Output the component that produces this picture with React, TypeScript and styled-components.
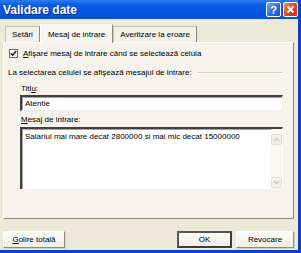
import * as React from 'react'
import styled, { createGlobalStyle, css } from 'styled-components'

const GlobalStyle = createGlobalStyle`
    html, body {
        margin: 0;
        padding: 0;
        background: #ece9d8;
    }
    body {
        font-family: "Liberation Sans", Arial, sans-serif;
        font-size: 8px;
        color: #000;
    }
`

const Window = styled.div`
    width: 301px;
    height: 253px;
    box-sizing: border-box;
    display: flex;
    flex-direction: column;
    background: #ece9d8;
    border-right: 3px solid #0842c8;
    border-bottom: 3px solid #0842c8;
    overflow: hidden;
`

const TitleBar = styled.div`
    height: 19px;
    flex: none;
    margin-right: -3px;
    display: flex;
    align-items: center;
    justify-content: space-between;
    padding: 0 3px 0 3px;
    background: linear-gradient(#2f7df2 0%, #0a5ce4 25%, #0654e0 60%, #0650d6 100%);
`

const Title = styled.span`
    color: #fff;
    font-weight: bold;
    font-size: 12px;
    text-shadow: 1px 1px 0 #0a2f8a;
`

const TitleButtons = styled.div`
    display: flex;
    gap: 2px;
`

const TitleButton = styled.div<{ $close?: boolean }>`
    width: 15px;
    height: 15px;
    box-sizing: border-box;
    border: 1px solid #fff;
    border-radius: 2px;
    display: flex;
    align-items: center;
    justify-content: center;
    color: #fff;
    font-weight: bold;
    font-size: 11px;
    background: ${p => p.$close
        ? 'linear-gradient(135deg, #f08a6c, #e0431e 55%, #c53512)'
        : 'linear-gradient(135deg, #7fa8f7, #2e68e8 55%, #1c4fd0)'};
`

const Body = styled.div`
    flex: 1;
    display: flex;
    flex-direction: column;
    padding: 4px 4px 0 3px;
`

const TabStrip = styled.div`
    display: flex;
    align-items: flex-end;
    height: 19px;
    padding-left: 2px;
`

const Tab = styled.div<{ $active?: boolean }>`
    height: 16px;
    box-sizing: border-box;
    padding: 0 6px;
    display: flex;
    align-items: center;
    background: #f4f2e8;
    border: 1px solid #c9c5b4;
    border-bottom: none;
    border-right-color: #8c8a80;
    ${p => p.$active && css`
        height: 19px;
        margin-bottom: -1px;
        background: #f7f6ef;
        border-color: #fff;
        border-right-color: #8c8a80;
        padding: 0 7px;
        position: relative;
        z-index: 1;
    `}
`

const Panel = styled.div`
    height: 177px;
    flex: none;
    box-sizing: border-box;
    background: #f5f3eb;
    border: 1px solid #fff;
    border-right-color: #8c8a80;
    border-bottom-color: #8c8a80;
    padding: 5px 11px 0 4px;
    display: flex;
    flex-direction: column;
`

const CheckRow = styled.label`
    display: flex;
    align-items: center;
    gap: 5px;
    height: 11px;
    padding-left: 1px;
`

const CheckBox = styled.span`
    width: 9px;
    height: 9px;
    box-sizing: border-box;
    border: 1px solid #6f6f6f;
    background: #fff;
    display: flex;
    align-items: center;
    justify-content: center;
`

const Group = styled.div`
    display: flex;
    align-items: center;
    gap: 6px;
    margin-top: 8px;
    height: 11px;
`

const GroupLine = styled.div`
    flex: 1;
    height: 1px;
    background: #d2cfc0;
    border-bottom: 1px solid #fff;
`

const Field = styled.div`
    display: flex;
    flex-direction: column;
    padding-left: 12px;
`

const FieldLabel = styled.div<{ $gap: number }>`
    margin-top: ${p => p.$gap}px;
    height: 10px;
    line-height: 10px;
    padding-left: 1px;
`

const Underlined = styled.span`
    text-decoration: underline;
`

const sunken = css`
    box-sizing: border-box;
    background: #fff;
    border: 1px solid #f1efe6;
    border-top: 2px solid #404040;
    border-left: 2px solid #404040;
    box-shadow: inset 1px 1px 0 #a8a598;
`

const TextInput = styled.div`
    ${sunken}
    margin-top: 1px;
    height: 16px;
    width: 263px;
    padding: 2px 3px;
    line-height: 10px;
`

const TextArea = styled.div`
    ${sunken}
    margin-top: 2px;
    height: 62px;
    width: 263px;
    display: flex;
    border-bottom: none;
    border-right-color: #fff;
`

const TextAreaContent = styled.div`
    flex: 1;
    padding: 2px 3px;
    line-height: 11px;
`

const ScrollBar = styled.div`
    width: 11px;
    display: flex;
    flex-direction: column;
    justify-content: space-between;
    padding: 5px 0 1px;
    background: #f8f7f2;
`

const ScrollArrow = styled.div`
    height: 9px;
    display: flex;
    align-items: center;
    justify-content: center;
    background: #f1f0ea;
    border: 1px solid #e4e2d8;
    border-radius: 2px;
`

const ButtonRow = styled.div`
    display: flex;
    align-items: center;
    gap: 4px;
    margin-top: 12px;
`

const Spacer = styled.div`
    flex: 1;
`

const Button = styled.div<{ $width: number; $default?: boolean }>`
    width: ${p => p.$width}px;
    height: 17px;
    box-sizing: border-box;
    display: flex;
    align-items: center;
    justify-content: center;
    background: linear-gradient(#fbfbf7, #f1efe6);
    border: 1px solid #fff;
    border-right-color: #8e8c84;
    border-bottom-color: #8e8c84;
    box-shadow: 1px 1px 0 #d7d4c6;
    ${p => p.$default && css`
        border: 2px solid #3c3c3c;
        border-top-color: #555;
        border-left-color: #555;
        box-shadow: none;
    `}
`

const Arrow = ({ down }: { down?: boolean }) => (
    <svg width="7" height="5" viewBox="0 0 7 5">
        <path d={down ? 'M1 1 L3.5 3.5 L6 1' : 'M1 4 L3.5 1.5 L6 4'} stroke="#c2c4cc" strokeWidth="1.2" fill="none" />
    </svg>
)

export default function App() {
    return (
        <>
            <GlobalStyle />
            <Window>
                <TitleBar>
                    <Title>Validare date</Title>
                    <TitleButtons>
                        <TitleButton>?</TitleButton>
                        <TitleButton $close>
                            <svg width="9" height="9" viewBox="0 0 9 9">
                                <path d="M1.5 1.5 L7.5 7.5 M7.5 1.5 L1.5 7.5" stroke="#fff" strokeWidth="1.8" />
                            </svg>
                        </TitleButton>
                    </TitleButtons>
                </TitleBar>
                <Body>
                    <TabStrip>
                        <Tab>Setări</Tab>
                        <Tab $active>Mesaj de intrare</Tab>
                        <Tab>Avertizare la eroare</Tab>
                    </TabStrip>
                    <Panel>
                        <CheckRow>
                            <CheckBox>
                                <svg width="7" height="7" viewBox="0 0 7 7">
                                    <path d="M0.8 3.2 L2.6 5.2 L6.2 1" stroke="#1b1b1b" strokeWidth="1.5" fill="none" />
                                </svg>
                            </CheckBox>
                            <span><Underlined>A</Underlined>fişare mesaj de intrare când se selectează celula</span>
                        </CheckRow>
                        <Group>
                            <span>La selectarea celulei se afişează mesajul de intrare:</span>
                            <GroupLine />
                        </Group>
                        <Field>
                            <FieldLabel $gap={6}>Titl<Underlined>u</Underlined>:</FieldLabel>
                            <TextInput>Atentie</TextInput>
                            <FieldLabel $gap={4}><Underlined>M</Underlined>esaj de intrare:</FieldLabel>
                            <TextArea>
                                <TextAreaContent>Salariul mai mare decat 2800000 si mai mic decat 15000000</TextAreaContent>
                                <ScrollBar>
                                    <ScrollArrow><Arrow /></ScrollArrow>
                                    <ScrollArrow><Arrow down /></ScrollArrow>
                                </ScrollBar>
                            </TextArea>
                        </Field>
                    </Panel>
                    <ButtonRow>
                        <Button $width={62}><span><Underlined>G</Underlined>olire totală</span></Button>
                        <Spacer />
                        <Button $width={55} $default>OK</Button>
                        <Button $width={58}>Revocare</Button>
                    </ButtonRow>
                </Body>
            </Window>
        </>
    )
}
